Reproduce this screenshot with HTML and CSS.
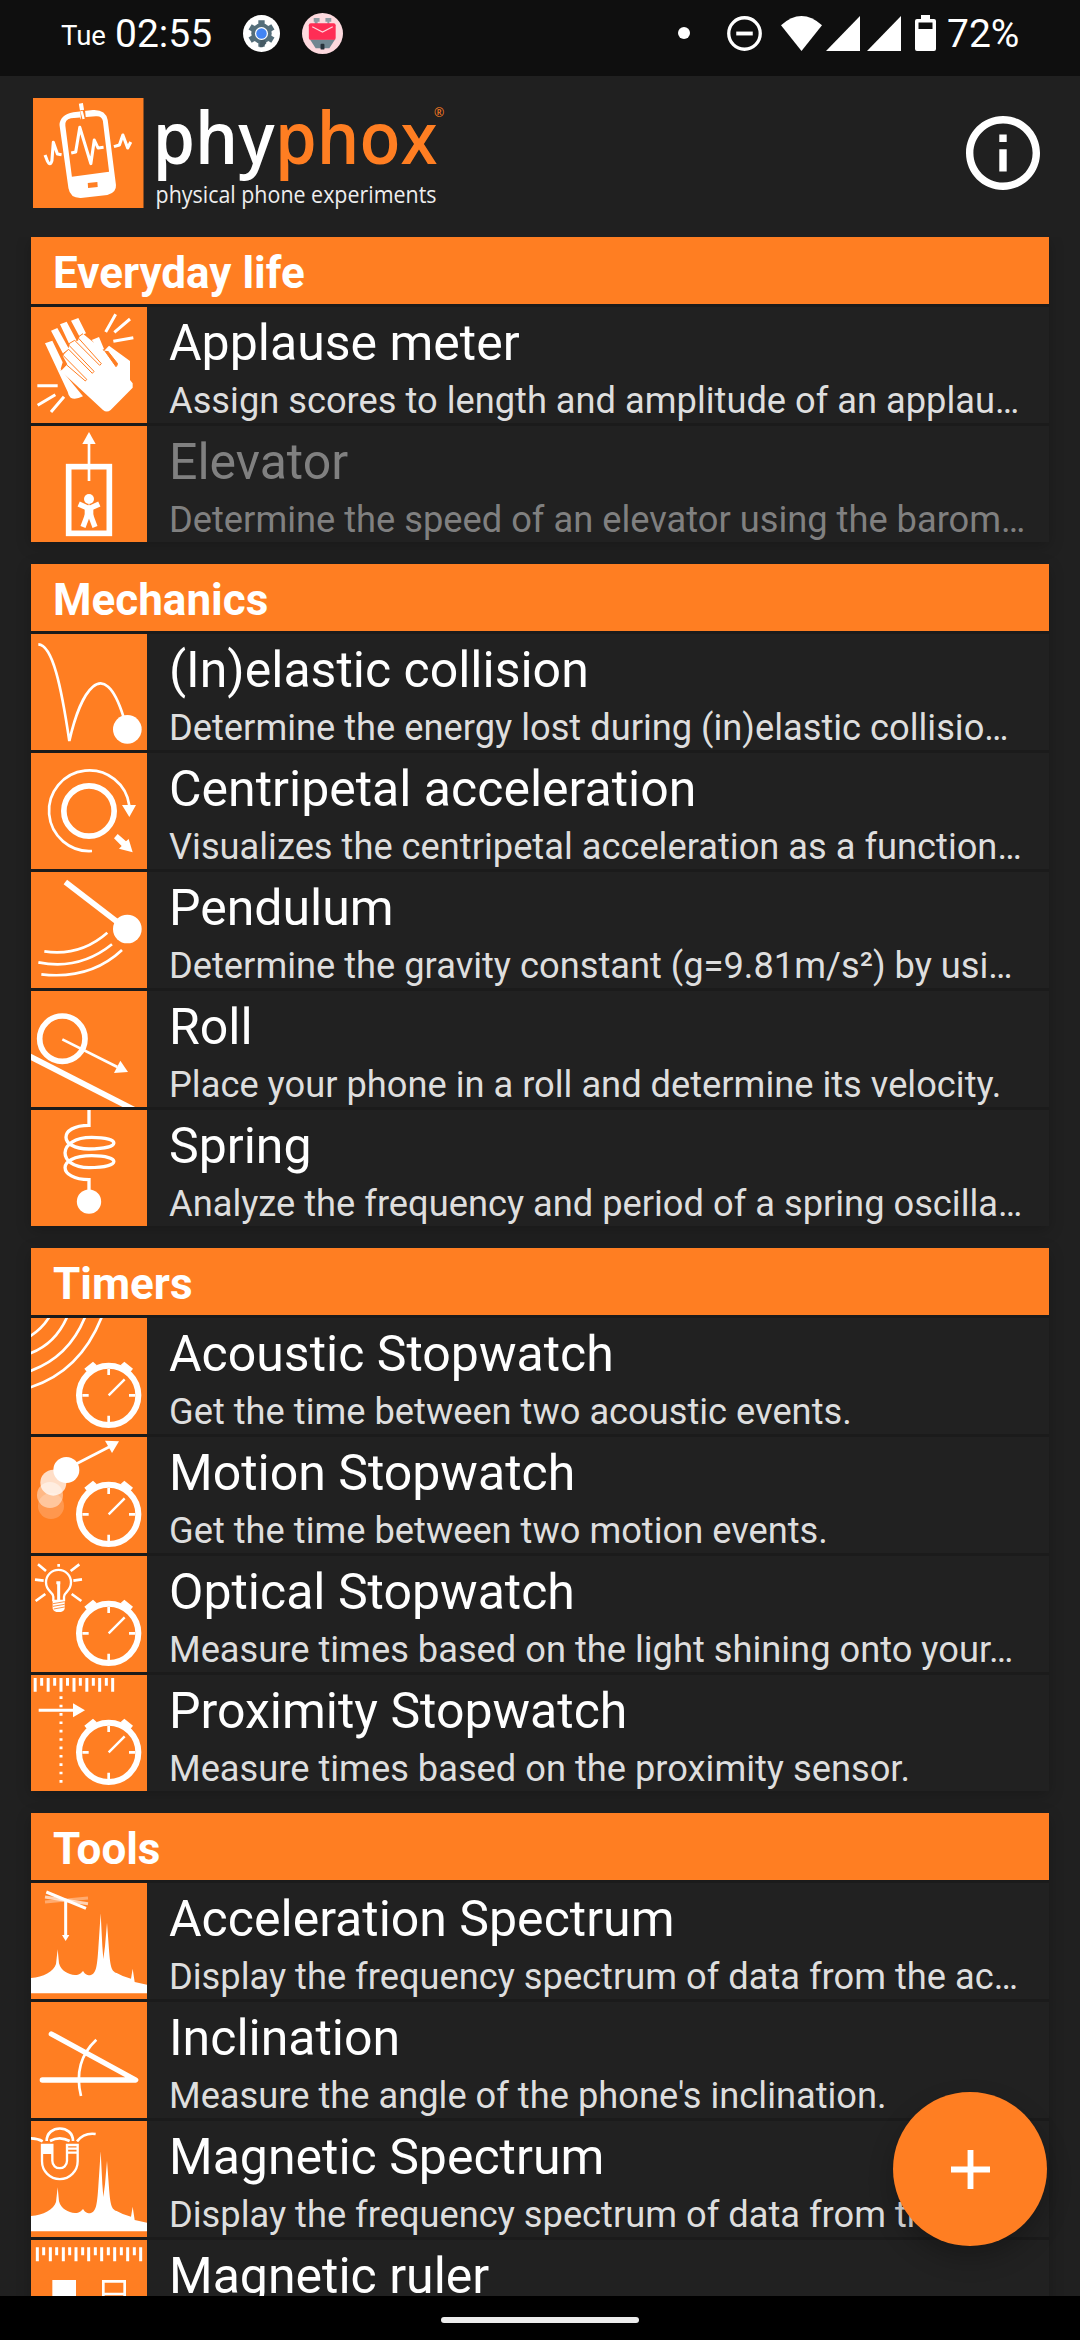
FILE: index.html
```html
<!DOCTYPE html>
<html lang="en">
<head>
<meta charset="utf-8">
<title>phyphox</title>
<link rel="stylesheet" href="styles.css">
</head>
<body>
<svg class="defs" aria-hidden="true">
  <symbol id="watch" viewBox="0 0 348 348">
    <circle cx="233" cy="232" r="89" fill="none" stroke="#fff" stroke-width="18"/>
    <path d="M160 152L186 131L197 141L172 167ZM306 152L280 131L269 141L294 167Z" fill="#fff"/>
    <path d="M233 153V171M233 293V313M154 232H173M294 232H313" stroke="#fff" stroke-width="8"/>
    <path d="M233 232L281 184" stroke="#fff" stroke-width="7"/>
  </symbol>
  <symbol id="spectrum" viewBox="0 0 348 348">
    <path fill="#fff" d="M0 285C37 283 68 266 75 243L80 199L84 241C90 264 112 275 132 276C146 276 150 271 156 264C161 271 165 277 177 277C195 273 198 255 202 196L209 91L214 190L217 228L222 190L228 119L234 200C238 250 241 264 257 270Q275 281 300 287L305 257L311 297L348 305V331H0Z"/>
  </symbol>
</svg>
<div class="screen">
  <header class="status">
    <span class="day">Tue</span>
    <span class="clock">02:55</span>
    <svg class="settings" viewBox="0 0 38 38">
      <circle cx="19" cy="19" r="19" fill="#fff"/>
      <circle cx="19" cy="19" r="10.5" fill="#546e7a"/>
      <path d="M19 5.5V32.5M7.3 12.2L30.7 25.8M7.3 25.8L30.7 12.2" stroke="#546e7a" stroke-width="6.5"/>
      <path d="M19 19L24 29L20 33H17Z" fill="#455a64"/>
      <circle cx="19" cy="19" r="6.7" fill="#fff"/><circle cx="19" cy="19" r="5.4" fill="#4285f4"/>
    </svg>
    <svg class="mail" viewBox="0 0 42 42">
      <circle cx="21" cy="21" r="21" fill="#fdd9de"/>
      <path d="M12 5h6v4h-2v3h-3V9h-1zM24 5h6v4h-2v3h-2V9h-2z" fill="#8d9ba3"/>
      <path d="M8 27H34L28 36H14Z" fill="#708791"/>
      <rect x="7" y="10.500" width="27.500" height="17" rx="2" fill="#ff2d55"/>
      <path d="M10.500 14L21 19.500L31.500 14" fill="none" stroke="#ffd6dd" stroke-width="1.200"/>
      <rect x="19" y="31.500" width="4" height="6" rx="1" fill="#26323a"/>
    </svg>
    <span class="spacer"></span>
    <span class="dot"></span>
    <svg class="dnd" viewBox="0 0 36 36"><circle cx="18" cy="18" r="16.200" fill="none" stroke="#fff" stroke-width="3.400"/><path d="M9.500 18H26.500" stroke="#fff" stroke-width="4"/></svg>
    <svg class="wifi" viewBox="0 0 42 36" preserveAspectRatio="none"><path d="M0 9.500Q21 -9.500 42 9.500L21 36Z" fill="#fff"/></svg>
    <svg class="signal" viewBox="0 0 34 35"><path d="M34 0V35H0Z" fill="#fff"/></svg>
    <svg class="signal two" viewBox="0 0 34 35"><path d="M34 0V35H0Z" fill="#fff"/></svg>
    <svg class="battery" viewBox="0 0 21 36"><path fill="#fff" fill-rule="evenodd" d="M6 0H15V4H19Q21 4 21 6V34Q21 36 19 36H2Q0 36 0 34V6Q0 4 2 4H6ZM3.500 7.500V14H17.500V7.500Z"/></svg>
    <span class="percent">72%</span>
  </header>

  <div class="toolbar">
    <svg class="logo" viewBox="96 294 1220 348" preserveAspectRatio="none" role="img" aria-label="phyphox">
      <rect x="96" y="294" width="321" height="330" fill="#ff7e22"/>
      <path d="M235 310L239 334M238 334L240 357" stroke="#fff" stroke-width="12" fill="none"/>
      <path fill="#fff" fill-rule="evenodd" d="M213 337L270 330Q307 328 313 360L337 555Q339 578 312 585L235 594Q204 595 199 565L173 375Q174 345 213 337ZM206 355Q188 359 190 377L209 530L317 515L299 363Q296 347 278 349Z"/>
      <path d="M233 331L247 329L250 359L236 361Z" fill="#ff7e22"/>
      <path d="M237 333L243 357" stroke="#fff" stroke-width="7"/>
      <path d="M255 549L283 546L284 561L256 564Z" fill="#ff7e22"/>
      <path d="M131 465L137 481Q146 501 151 482L155 427L167 462L179 464M207 459L220 456L232 382L264 491L274 420L285 444L301 442M331 440L347 435L357 405L371 444L380 426" fill="none" stroke="#fff" stroke-width="9" stroke-linejoin="round"/>
      <text class="word" x="444" y="492" textLength="354" lengthAdjust="spacingAndGlyphs">phy</text>
      <text class="word accent" x="799" y="492" textLength="472" lengthAdjust="spacingAndGlyphs">phox</text>
      <text class="reg" x="1261" y="351">®</text>
      <text class="tag" x="452" y="608" textLength="816" lengthAdjust="spacingAndGlyphs">physical phone experiments</text>
    </svg>
    <svg class="info" viewBox="2 2 20 20"><path fill="#fff" d="M11 7h2v2h-2zm0 4h2v6h-2zm1-9C6.480 2 2 6.480 2 12s4.480 10 10 10 10-4.480 10-10S17.520 2 12 2zm0 18c-4.410 0-8-3.590-8-8s3.590-8 8-8 8 3.590 8 8-3.590 8-8 8z"/></svg>
  </div>

  <main class="list">
    <section class="group">
      <h2>Everyday life</h2>
      <article class="row">
        <svg class="icon" viewBox="93 246 348 348">
          <g fill="#fff">
            <path d="M135 355L157 347L188 412L182 432L249 514Q225 526 212 518Q205 512 203 500Z"/>
            <path d="M153 317L172 309L207 372L190 388ZM180 298L200 290L229 345L209 360ZM213 287L235 279L258 325L238 334ZM275 345L297 336L312 372L303 377ZM312 378L327 362L390 408V465L398 475V488L332 555Q320 564 309 555L182 437L202 418L188 392L205 374L208 357L222 347L234 347L237 335L249 326Z"/>
          </g>
          <g fill="none" stroke="#ff7e22" stroke-width="3">
            <path d="M183 436L199 419L256 468L260 463L190 392L188 387L206 373L277 445L282 439L207 361V356L224 346L299 421L304 416L236 340V335L249 326"/>
            <path d="M314 377L348 425Q353 421 352 415L323 378" fill="#ff7e22"/>
          </g>
          <path d="M317 321L347 268M343 322L390 282M340 349L400 338M112 482H173M113 541L166 509M153 561L192 515" stroke="#fff" stroke-width="9"/>
        </svg>
        <div class="text"><h3>Applause meter</h3><p>Assign scores to length and amplitude of an applau…</p></div>
      </article>
      <article class="row disabled">
        <svg class="icon" viewBox="93 603 348 348">
          <rect x="206" y="725" width="122" height="200" fill="none" stroke="#fff" stroke-width="17"/>
          <path d="M267 768V650" stroke="#fff" stroke-width="8"/><path d="M247 657L267 621L287 657Z" fill="#fff"/>
          <circle cx="267" cy="822" r="15" fill="#fff"/>
          <path d="M236 837L267 851L298 837M249 906L267 858L285 906" fill="none" stroke="#fff" stroke-width="16"/><path d="M254 845H280V875H254Z" fill="#fff"/>
        </svg>
        <div class="text"><h3>Elevator</h3><p>Determine the speed of an elevator using the barom…</p></div>
      </article>
    </section>

    <section class="group">
      <h2>Mechanics</h2>
      <article class="row">
        <svg class="icon" viewBox="93 237 348 348">
          <path d="M115 268C158 270 184 395 208 558C240 416 310 290 371 487" fill="none" stroke="#fff" stroke-width="8"/><circle cx="382" cy="523" r="43" fill="#fff"/>
        </svg>
        <div class="text"><h3>(In)elastic collision</h3><p>Determine the energy lost during (in)elastic collisio…</p></div>
      </article>
      <article class="row">
        <svg class="icon" viewBox="93 594 348 348">
          <circle cx="267" cy="768" r="75.500" fill="none" stroke="#fff" stroke-width="17"/>
          <path d="M276 888A121 121 0 1 1 388 752" fill="none" stroke="#fff" stroke-width="8"/>
          <path d="M366 750H408L388 786ZM342 850L353 837L378 859L386 852L398 892L357 881L365 873Z" fill="#fff"/>
        </svg>
        <div class="text"><h3>Centripetal acceleration</h3><p>Visualizes the centripetal acceleration as a function…</p></div>
      </article>
      <article class="row">
        <svg class="icon" viewBox="93 36 348 348">
          <path d="M196 66L355 188" stroke="#fff" stroke-width="17"/><circle cx="382" cy="207" r="43" fill="#fff"/>
          <path d="M133 274Q240 290 322 218M115 307Q238 332 336 253M124 343Q270 360 366 270" fill="none" stroke="#fff" stroke-width="8"/>
        </svg>
        <div class="text"><h3>Pendulum</h3><p>Determine the gravity constant (g=9.81m/s²) by usi…</p></div>
      </article>
      <article class="row">
        <svg class="icon" viewBox="93 393 348 348">
          <circle cx="187" cy="536" r="68" fill="none" stroke="#fff" stroke-width="17"/>
          <path d="M85 587L410 753" stroke="#fff" stroke-width="17"/><path d="M187 538L352 621" stroke="#fff" stroke-width="8"/><path d="M342 639L361 602L384 636Z" fill="#fff"/>
        </svg>
        <div class="text"><h3>Roll</h3><p>Place your phone in a roll and determine its velocity.</p></div>
      </article>
      <article class="row">
        <svg class="icon" viewBox="93 750 348 348">
          <path d="M267 745V796C175 796 175 867 267 867C365 867 365 832 275 832C170 832 170 923 267 923C365 923 365 887 275 887C165 887 175 959 267 959V1000" fill="none" stroke="#fff" stroke-width="10"/><circle cx="267" cy="1025" r="36.500" fill="#fff"/>
        </svg>
        <div class="text"><h3>Spring</h3><p>Analyze the frequency and period of a spring oscilla…</p></div>
      </article>
    </section>

    <section class="group">
      <h2>Timers</h2>
      <article class="row">
        <svg class="icon" viewBox="0 0 348 348">
          <path d="M-5 56Q34 32 56 -5M-5 107Q74 78 109 -5M-5 160Q114 118 163 -5M-5 209Q148 161 213 -5" fill="none" stroke="#fff" stroke-width="8"/>
          <use href="#watch" width="348" height="348"/>
        </svg>
        <div class="text"><h3>Acoustic Stopwatch</h3><p>Get the time between two acoustic events.</p></div>
      </article>
      <article class="row">
        <svg class="icon" viewBox="0 0 348 348">
          <circle cx="60" cy="207" r="39" fill="#fff" opacity=".2"/><circle cx="57" cy="174" r="39" fill="#fff" opacity=".45"/><circle cx="67" cy="137" r="39" fill="#fff" opacity=".75"/><circle cx="106" cy="99" r="39" fill="#fff"/>
          <path d="M135 81L240 27" stroke="#fff" stroke-width="8"/><path d="M222 11L264 13L243 48Z" fill="#fff"/>
          <use href="#watch" width="348" height="348"/>
        </svg>
        <div class="text"><h3>Motion Stopwatch</h3><p>Get the time between two motion events.</p></div>
      </article>
      <article class="row">
        <svg class="icon" viewBox="0 0 348 348">
          <path d="M67 136V122C67 108 45 107 45 79A37 37 0 0 1 120 79C120 107 99 108 99 122V136" fill="none" stroke="#fff" stroke-width="7"/>
          <path d="M83 24V32M21 25L45 45M145 25L119 45M12 71L38 74M153 70L127 74M14 135L43 114M151 135L122 114" stroke="#fff" stroke-width="8"/>
          <path d="M83 78V133M76 80H88" stroke="#fff" stroke-width="9"/>
          <path d="M65 131H101V158Q98 168 83 168Q68 168 65 158Z" fill="#fff"/>
          <path d="M66 143L101 137M66 151L101 145M68 159L101 153" stroke="#ff7e22" stroke-width="2.500"/>
          <use href="#watch" width="348" height="348"/>
        </svg>
        <div class="text"><h3>Optical Stopwatch</h3><p>Measure times based on the light shining onto your…</p></div>
      </article>
      <article class="row">
        <svg class="icon" viewBox="0 0 348 348">
          <path d="M12.500 9V50M51.500 9V50M90 9V50M129 9V50M167.500 9V50M206 9V50M245 9V50M32 9V32M71 9V32M109.500 9V32M148 9V32M187 9V32M226 9V32" stroke="#fff" stroke-width="9"/>
          <path d="M90 64V330" stroke="#fff" stroke-width="9" stroke-dasharray="8 17.100"/>
          <path d="M23 106H130" stroke="#fff" stroke-width="9"/><path d="M126 85L162 106L126 127Z" fill="#fff"/>
          <use href="#watch" width="348" height="348"/>
        </svg>
        <div class="text"><h3>Proximity Stopwatch</h3><p>Measure times based on the proximity sensor.</p></div>
      </article>
    </section>

    <section class="group">
      <h2>Tools</h2>
      <article class="row">
        <svg class="icon" viewBox="0 0 348 348">
          <path d="M42 57L171 45" stroke="#fff" stroke-width="9" opacity=".35"/><path d="M42 42L171 62" stroke="#fff" stroke-width="9" opacity=".65"/>
          <path d="M46 27L165 76M104 51V160" stroke="#fff" stroke-width="9"/><path d="M93 156H115L104 174Z" fill="#fff"/>
          <use href="#spectrum" width="348" height="348"/>
        </svg>
        <div class="text"><h3>Acceleration Spectrum</h3><p>Display the frequency spectrum of data from the ac…</p></div>
      </article>
      <article class="row">
        <svg class="icon" viewBox="93 606 348 348">
          <path d="M154 702L407 840H127" fill="none" stroke="#fff" stroke-width="16" stroke-linecap="round" stroke-linejoin="round"/><path d="M289 719Q218 785 243 888" fill="none" stroke="#fff" stroke-width="8"/>
        </svg>
        <div class="text"><h3>Inclination</h3><p>Measure the angle of the phone's inclination.</p></div>
      </article>
      <article class="row">
        <svg class="icon" viewBox="0 0 348 348">
          <path d="M33 72H64V119C64 149 108 149 108 119V72H140V121A53.500 53.500 0 0 1 33 121ZM108 83H140M108 95H140" fill="none" stroke="#fff" stroke-width="7"/><rect x="30" y="70" width="36" height="29" fill="#fff"/>
          <path d="M47 60C47 10 126 10 126 60M57 60Q86 44 116 60M-4 52Q20 52 35 61M138 61Q159 34 194 39" fill="none" stroke="#fff" stroke-width="8"/>
          <use href="#spectrum" width="348" height="348"/>
        </svg>
        <div class="text"><h3>Magnetic Spectrum</h3><p>Display the frequency spectrum of data from the m…</p></div>
      </article>
      <article class="row">
        <svg class="icon" viewBox="0 0 348 348">
          <path d="M19 22V64M58 22V64M97 22V64M135 22V64M173 22V64M212 22V64M251 22V64M290 22V64M329 22V64M38 22V46M77 22V46M116 22V46M155 22V46M193 22V46M232 22V46M271 22V46M310 22V46" stroke="#fff" stroke-width="9"/>
          <path d="M64 120H135V190H64Z" fill="#fff"/><path d="M217 124H281V162H217ZM217 162V200H281V162" fill="none" stroke="#fff" stroke-width="8"/>
        </svg>
        <div class="text"><h3>Magnetic ruler</h3></div>
      </article>
    </section>
  </main>

  <button class="fab" aria-label="Add experiment"><svg viewBox="0 0 40 40"><path d="M20 0V40M0 20H40" stroke="#fff" stroke-width="6"/></svg></button>
  <footer class="nav"><span></span></footer>
</div>
</body>
</html>
```

FILE: styles.css
```css
* { box-sizing: border-box; }
body, h2, h3, p { margin: 0; }
body { background: #000; font-family: Roboto, sans-serif; color: #fff; }
svg { display: block; flex: none; }
.defs { position: absolute; width: 0; height: 0; }

.screen {
  position: relative;
  display: flex;
  flex-direction: column;
  width: 1080px;
  height: 2340px;
  overflow: hidden;
  background: #202020;
}

.status {
  flex: none;
  display: flex;
  align-items: center;
  height: 76px;
  padding: 0 61px 10px 61px;
  background: #0f0f0f;
  white-space: nowrap;
}
.day { width: 54px; font-size: 27.5px; line-height: 40px; padding-top: 6px; }
.clock { width: 128px; font-size: 39px; line-height: 48px; padding-top: 2px; }
.settings { width: 37px; height: 37px; }
.mail { width: 41px; height: 41px; margin-left: 22px; }
.spacer { flex: 1; }
.dot { width: 12px; height: 12px; border-radius: 50%; background: #fff; }
.dnd { width: 35px; height: 35px; margin-left: 37px; }
.wifi { width: 41px; height: 35px; margin-left: 19px; }
.signal { width: 34px; height: 35px; margin-left: 4px; }
.signal.two { margin-left: 7px; }
.battery { width: 21px; height: 36px; margin-left: 14px; }
.percent { width: 72px; margin-left: 11px; font-size: 39px; line-height: 48px; padding-top: 2px; }

.toolbar {
  flex: none;
  display: flex;
  justify-content: space-between;
  align-items: flex-start;
  height: 161px;
  padding: 22px 40px 0 33px;
}
.logo { width: 420px; height: 116px; overflow: visible; }
.word { font: 600 218px "Open Sans", sans-serif; fill: #fff; }
.accent { fill: #ff7e22; }
.reg { font: 36px "Open Sans", sans-serif; fill: #ff7e22; }
.tag { font: 500 69px "Open Sans", sans-serif; fill: #eee; }
.info { width: 74px; height: 74px; margin-top: 18px; }

.list {
  flex: 1;
  min-height: 0;
  display: flex;
  flex-direction: column;
  gap: 22px;
  padding: 0 31px;
  overflow: hidden;
}
.group {
  flex: none;
  display: flex;
  flex-direction: column;
  gap: 3px;
  background: #1b1b1b;
  box-shadow: 0 4px 14px rgba(0, 0, 0, .22);
}
h2 {
  height: 67px;
  padding: 11px 22px 0;
  background: #ff7e22;
  font-size: 44px;
  font-weight: 700;
  line-height: 51px;
}
.row { display: flex; gap: 22px; height: 116px; background: #212121; }
.icon { width: 116px; height: 116px; background: #ff7e22; }
.text { flex: 1; min-width: 0; padding-top: 6px; white-space: nowrap; }
h3 { font-size: 50px; font-weight: 400; line-height: 60px; }
p { margin-top: 7px; font-size: 36.250px; line-height: 42px; color: #dedede; }
.disabled h3, .disabled p { color: #808080; }

.fab {
  position: absolute;
  left: 893px;
  top: 2092px;
  display: grid;
  place-items: center;
  width: 154px;
  height: 154px;
  padding: 0;
  border: 0;
  border-radius: 50%;
  background: #ff7e22;
  box-shadow: 0 12px 24px rgba(0, 0, 0, .25);
}
.fab svg { width: 39px; height: 39px; }

.nav {
  flex: none;
  display: flex;
  justify-content: center;
  height: 44px;
  padding-top: 21px;
  background: #000;
}
.nav span { width: 198px; height: 6px; border-radius: 3px; background: #ececec; }
```
